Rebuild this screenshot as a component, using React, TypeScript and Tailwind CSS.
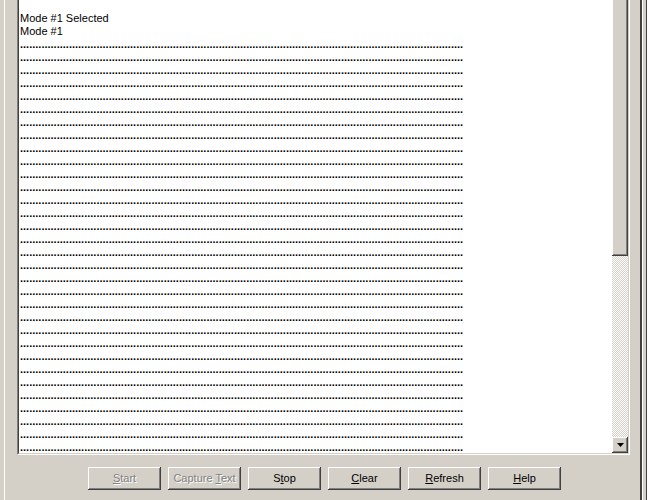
import React from "react";

const raised =
  "shadow-[inset_-1px_-1px_#404040,inset_1px_1px_#ffffff,inset_-2px_-2px_#808080,inset_2px_2px_#d4d0c8]";

function Btn({
  pre,
  u,
  post,
  disabled,
}: {
  pre: string;
  u: string;
  post: string;
  disabled?: boolean;
}) {
  return (
    <div
      className={`w-[73px] h-[23px] flex items-center justify-center bg-[#d4d0c8] text-[11px] leading-[13px] ${raised} ${
        disabled ? "text-[#808080] [text-shadow:1px_1px_0_#ffffff]" : "text-black"
      }`}
    >
      <span>
        {pre}
        <span className="underline underline-offset-[1px]">{u}</span>
        {post}
      </span>
    </div>
  );
}

export default function App() {
  const dots = ".".repeat(145);
  const lines = Array.from({ length: 32 }, (_, i) => i);
  return (
    <div
      className="w-[647px] h-[500px] bg-[#d4d0c8] flex flex-row overflow-hidden"
      style={{ fontFamily: '"Liberation Sans", Arial, sans-serif' }}
    >
      <div className="w-[4px] h-full" />
      <div className="w-[1px] h-full bg-white" />
      <div className="w-[635px] h-full flex flex-col pl-[12px] pr-[10px]">
        <div className="h-[455px] w-[613px] border-l border-l-[#808080] border-b border-b-white border-r border-r-white">
          <div className="h-full w-full flex flex-row border-l border-l-[#404040] border-b border-b-[#d4d0c8] border-r border-r-[#d4d0c8]">
            <div className="w-[593px] h-full bg-white overflow-hidden pt-[12px] pl-px text-[11px] leading-[13px] text-black whitespace-nowrap">
              <div>Mode #1 Selected</div>
              <div>Mode #1</div>
              {lines.map((i) => (
                <div key={i} className="font-bold">
                  {dots}
                </div>
              ))}
            </div>
            <div className="w-[16px] h-full flex flex-col overflow-hidden">
              <div className={`h-[260px] -mt-[4px] shrink-0 bg-[#d4d0c8] ${raised}`} />
              <div className="flex-1 bg-[repeating-conic-gradient(#d4d0c8_0_25%,#ffffff_0_50%)] bg-[length:2px_2px]" />
              <div className={`h-[16px] shrink-0 bg-[#d4d0c8] flex items-center justify-center ${raised}`}>
                <svg width="7" height="4" viewBox="0 0 7 4">
                  <path d="M0 0H7L3.5 4Z" fill="#000" />
                </svg>
              </div>
            </div>
          </div>
        </div>
        <div className="flex flex-row gap-[7px] pl-[71px] pt-[12px]">
          <Btn pre="" u="S" post="tart" disabled />
          <Btn pre="Capture " u="T" post="ext" disabled />
          <Btn pre="S" u="t" post="op" />
          <Btn pre="" u="C" post="lear" />
          <Btn pre="" u="R" post="efresh" />
          <Btn pre="" u="H" post="elp" />
        </div>
      </div>
      <div className="w-[2px] h-full bg-[#404040]" />
      <div className="w-[1px] h-full bg-white" />
      <div className="w-[3px] h-full" />
      <div className="w-[1px] h-full bg-[#404040]" />
    </div>
  );
}
